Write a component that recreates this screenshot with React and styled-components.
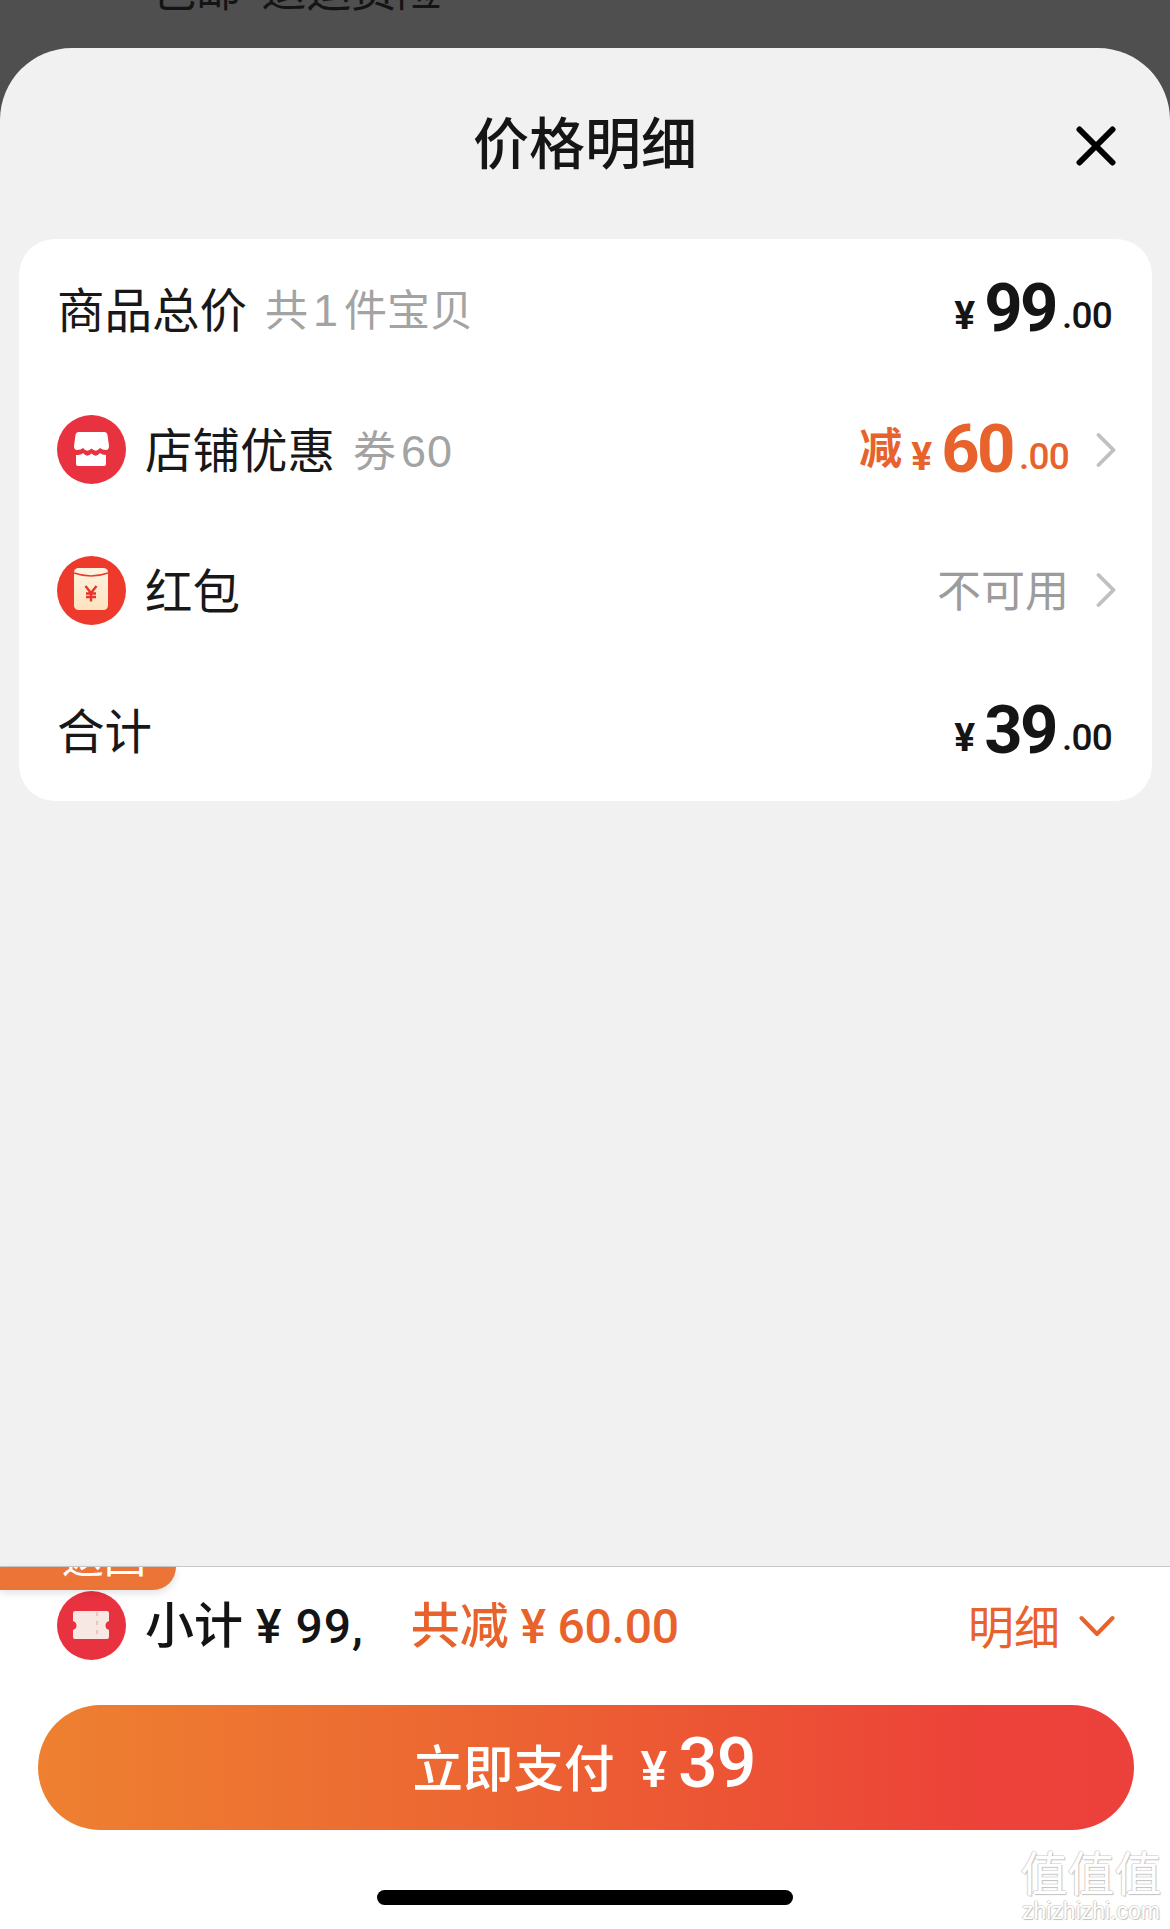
import React from "react";
import styled, { createGlobalStyle } from "styled-components";

const CJK = `"Noto Sans CJK SC", "Noto Sans", sans-serif`;
const NUM = `Roboto, "Liberation Sans", "Noto Sans CJK SC", sans-serif`;
const ORANGE = "#e8622c";

const Global = createGlobalStyle`
  html, body { margin: 0; padding: 0; background: #4f4f4f; }
  * { box-sizing: border-box; }
`;
const Page = styled.div`
  width: 1170px; height: 1929px; overflow: hidden; position: relative;
  display: flex; flex-direction: column; background: #4f4f4f; font-family: ${CJK};
`;
const Backdrop = styled.div`
  height: 48px; flex: none; padding-left: 151px; overflow: hidden;
  font-size: 45px; line-height: 45px; color: #141414; white-space: pre;
  & > span { display: block; margin-top: -35px; }
`;
const Sheet = styled.div`
  flex: 1; display: flex; flex-direction: column; background: #f1f1f1;
  border-radius: 72px 72px 0 0; overflow: hidden; min-height: 0;
`;
const Header = styled.header`
  height: 191px; flex: none; display: flex; justify-content: center; position: relative; padding-top: 57px;
`;
const Title = styled.h1`
  margin: 0; font-size: 56px; line-height: 70px; font-weight: 500; color: #151515;
`;
const Close = styled.svg`
  position: absolute; right: 54px; top: 78px; width: 40px; height: 40px;
`;
const Card = styled.section`
  margin: 0 18px 0 19px; background: #fff; border-radius: 36px; flex: none; display: flex; flex-direction: column;
`;
const Row = styled.div`
  height: 140.5px; padding: 0 36px 0 38px; display: flex; align-items: center;
`;
const Left = styled.div`
  flex: 1; display: flex; align-items: center; min-width: 0;
`;
const Badge = styled.svg`
  width: 69px; height: 69px; flex: none; margin-right: 19px;
`;
const Label = styled.span`
  font-size: 47.5px; line-height: 60px; color: #181818; margin-bottom: 3px;
`;
const Sub = styled.span`
  margin-left: 18px; font-size: 43px; line-height: 60px; color: #a3a3a3;
  & > i { font-family: "Liberation Sans", sans-serif; font-style: normal; font-size: 45px; margin: 0 5px; letter-spacing: 1px; }
`;
const Money = styled.div`
  white-space: nowrap; color: ${p => p.$tone || "#151515"}; font-family: ${NUM}; margin-right: ${p => p.$inset}px; margin-bottom: 2px;
`;
const Off = styled.span`
  font-family: ${CJK}; font-size: 43px; font-weight: 700; margin-right: 9px; vertical-align: 8px;
`;
const Yen = styled.span`
  font-size: 39px; font-weight: 700; margin-right: 9px; vertical-align: 2px;
`;
const Whole = styled.span`
  font-size: 67px; font-weight: 700; line-height: 70px; letter-spacing: -2.5px; margin-right: 6px;
`;
const Cents = styled.span`
  font-size: 37px; font-weight: 500; letter-spacing: -0.8px; vertical-align: 3px;
`;
const Muted = styled.span`
  font-size: 44px; line-height: 60px; color: #9c9c9c; margin-bottom: 4px;
`;
const Chevron = styled.svg`
  width: 20px; height: 36px; flex: none; margin-left: 27px;
`;
const Spacer = styled.div`
  flex: 1;
`;
const Footer = styled.footer`
  height: 363px; flex: none; background: #fff; border-top: 1px solid #c9c9c9; position: relative;
  display: flex; flex-direction: column; align-items: stretch;
`;
const FlagTab = styled.div`
  position: absolute; left: 0; top: 0; width: 176px; height: 23px; overflow: hidden;
  background: #ec7436; border-radius: 0 0 32px 0; box-shadow: 0 3px 8px rgba(0,0,0,.12);
  color: #fff; font-size: 42px; line-height: 42px; padding-left: 62px;
  & > span { display: block; margin-top: -33px; }
`;
const Summary = styled.div`
  margin-top: 24px; height: 69px; padding: 0 55px 0 57px; display: flex; align-items: center; flex: none;
`;
const Subtotal = styled.span`
  font-size: 49px; font-weight: 500; color: #141414; line-height: 60px; white-space: pre; margin-bottom: 3px;
`;
const Num = styled.span`
  font-family: ${NUM}; font-weight: 500; letter-spacing: ${p => p.$track}px; font-size: 48px;
`;
const Saved = styled.span`
  margin-left: 47px; font-size: 49px; font-weight: 500; color: ${ORANGE}; line-height: 60px; white-space: pre; margin-bottom: 3px;
`;
const Detail = styled.span`
  margin-left: auto; font-size: 46px; color: ${ORANGE}; line-height: 60px; margin-bottom: 4px;
`;
const Caret = styled.svg`
  width: 36px; height: 22px; margin-left: 19px; flex: none;
`;
const PayButton = styled.button`
  margin: 45px 36px 0 38px; height: 125px; flex: none; border: 0; border-radius: 63px; color: #fff;
  background: linear-gradient(90deg, #ee8030 0%, #ec6a32 35%, #ec5634 60%, #ec4339 85%, #ec413b 100%);
  display: flex; align-items: center; justify-content: center; font-family: ${CJK}; padding: 0 4px 0 0;
`;
const PayText = styled.span`
  font-size: 50.5px; font-weight: 500; margin-right: 26px; margin-bottom: 6px;
`;
const PayYen = styled.span`
  font-family: ${NUM}; font-size: 50px; font-weight: 500; margin-right: 11px; margin-top: 4px;
`;
const PayNum = styled.span`
  font-family: ${NUM}; font-size: 70px; font-weight: 500; letter-spacing: -1px; margin-bottom: 9px;
`;
const HomeBar = styled.div`
  margin: 60px auto 0; width: 416px; height: 15px; border-radius: 8px; background: #000; flex: none;
`;
const Watermark = styled.div`
  position: absolute; right: 6px; bottom: 7px; width: 146px; text-align: center; color: #fff;
  text-shadow: 1px 1px 1px #c0c0c0, -1px 0 0 #d4d4d4, 0 -1px 0 #e0e0e0;
  & > b { display: block; font-size: 47px; line-height: 58px; font-weight: 400; white-space: nowrap; }
  & > small { display: block; font-family: "Liberation Sans", sans-serif; font-size: 23px; line-height: 22px; white-space: nowrap; }
`;

const Price = ({ whole, tone, off, inset = 4 }) => (
  <Money $tone={tone} $inset={inset}>
    {off && <Off>减</Off>}
    <Yen>¥</Yen>
    <Whole>{whole}</Whole>
    <Cents>.00</Cents>
  </Money>
);

const Arrow = () => (
  <Chevron viewBox="0 0 20 36" fill="none" stroke="#c0c0c0" strokeWidth="3.8" strokeLinecap="round" strokeLinejoin="round">
    <path d="M2.5 3 L17.5 18 L2.5 33" />
  </Chevron>
);

const StoreIcon = () => (
  <Badge viewBox="0 0 69 69">
    <circle cx="34.5" cy="34.5" r="34.5" fill="#e8323f" />
    <path d="M22 17 H47 Q50 17 50.5 20 L52 31 Q52 35 49 35 Q45 35 43 33 Q39 38 34.5 33.5 Q30 38 26 33 Q24 35 20 35 Q17 35 17 31 L18.5 20 Q19 17 22 17 Z" fill="#fff" />
    <path d="M19 40 Q24 40 26 38 Q30 43 34.5 38.5 Q39 43 43 38 Q45 40 49 40 V49 Q49 51 47 51 H21 Q19 51 19 49 Z" fill="#fff" />
  </Badge>
);
const PacketIcon = () => (
  <Badge viewBox="0 0 69 69">
    <defs>
      <linearGradient id="pk" x1="0" y1="0" x2="0" y2="1">
        <stop offset="0" stopColor="#fff3e2" />
        <stop offset="1" stopColor="#fde3bd" />
      </linearGradient>
    </defs>
    <circle cx="34.5" cy="34.5" r="34.5" fill="#ed3a2c" />
    <rect x="17" y="12" width="34" height="42" rx="4.5" fill="url(#pk)" />
    <path d="M17 17 Q34 23 51 17" fill="none" stroke="#ed3a2c" strokeWidth="1.5" />
    <path d="M28.5 30 L34 37 L39.5 30 M29 37.5 H39 M29 41 H39 M34 37 V45.5" fill="none" stroke="#e6362c" strokeWidth="2.4" />
  </Badge>
);
const TicketIcon = () => (
  <Badge viewBox="0 0 69 69">
    <circle cx="34.5" cy="34.5" r="34.5" fill="#e93240" />
    <path d="M18 20 H50 Q52 20 52 22 V30 Q48.5 31 48.5 34.5 Q48.5 38 52 39 V46 Q52 48 50 48 H18 Q16 48 16 46 V39 Q19.5 38 19.5 34.5 Q19.5 31 16 30 V22 Q16 20 18 20 Z" fill="#f8e8e4" />
    <path d="M40 21 V47" stroke="#efc4be" strokeWidth="2.2" strokeDasharray="4 5" />
  </Badge>
);

export default function App() {
  return (
    <Page>
      <Global />
      <Backdrop><span>包邮  退运费险</span></Backdrop>
      <Sheet>
        <Header>
          <Title>价格明细</Title>
          <Close viewBox="0 0 40 40" fill="none" stroke="#000" strokeWidth="6" strokeLinecap="round">
            <path d="M3.5 3.5 L36.5 36.5 M36.5 3.5 L3.5 36.5" />
          </Close>
        </Header>
        <Card>
          <Row>
            <Left>
              <Label>商品总价</Label>
              <Sub>共<i>1</i>件宝贝</Sub>
            </Left>
            <Price whole="99" />
          </Row>
          <Row>
            <Left>
              <StoreIcon />
              <Label>店铺优惠</Label>
              <Sub>券<i>60</i></Sub>
            </Left>
            <Price whole="60" tone={ORANGE} off inset={0} />
            <Arrow />
          </Row>
          <Row>
            <Left>
              <PacketIcon />
              <Label>红包</Label>
            </Left>
            <Muted>不可用</Muted>
            <Arrow />
          </Row>
          <Row>
            <Left>
              <Label>合计</Label>
            </Left>
            <Price whole="39" />
          </Row>
        </Card>
        <Spacer />
        <Footer>
          <FlagTab><span>返回</span></FlagTab>
          <Summary>
            <TicketIcon />
            <Subtotal>小计<Num $track={1}> ¥ 99,</Num></Subtotal>
            <Saved>共减<Num $track={-0.2}> ¥ 60.00</Num></Saved>
            <Detail>明细</Detail>
            <Caret viewBox="0 0 36 22" fill="none" stroke={ORANGE} strokeWidth="4" strokeLinecap="round" strokeLinejoin="round">
              <path d="M2.5 3 L18 19 L33.5 3" />
            </Caret>
          </Summary>
          <PayButton>
            <PayText>立即支付</PayText>
            <PayYen>¥</PayYen>
            <PayNum>39</PayNum>
          </PayButton>
          <HomeBar />
          <Watermark>
            <b>值值值</b>
            <small>zhizhizhi.com</small>
          </Watermark>
        </Footer>
      </Sheet>
    </Page>
  );
}
